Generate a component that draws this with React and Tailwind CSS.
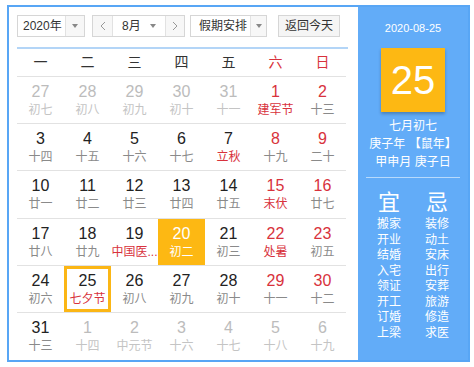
const FONT = { fontFamily: '"Liberation Sans", "Noto Sans CJK SC", sans-serif' };

const rows = [
  [
    { d: 27, l: "初七", out: true },
    { d: 28, l: "初八", out: true },
    { d: 29, l: "初九", out: true },
    { d: 30, l: "初十", out: true },
    { d: 31, l: "十一", out: true },
    { d: 1, l: "建军节", hol: true },
    { d: 2, l: "十三" },
  ],
  [
    { d: 3, l: "十四" },
    { d: 4, l: "十五" },
    { d: 5, l: "十六" },
    { d: 6, l: "十七" },
    { d: 7, l: "立秋", hol: true },
    { d: 8, l: "十九" },
    { d: 9, l: "二十" },
  ],
  [
    { d: 10, l: "廿一" },
    { d: 11, l: "廿二" },
    { d: 12, l: "廿三" },
    { d: 13, l: "廿四" },
    { d: 14, l: "廿五" },
    { d: 15, l: "末伏", hol: true },
    { d: 16, l: "廿七" },
  ],
  [
    { d: 17, l: "廿八" },
    { d: 18, l: "廿九" },
    { d: 19, l: "中国医...", hol: true },
    { d: 20, l: "初二", today: true },
    { d: 21, l: "初三" },
    { d: 22, l: "处暑", hol: true },
    { d: 23, l: "初五" },
  ],
  [
    { d: 24, l: "初六" },
    { d: 25, l: "七夕节", hol: true, sel: true },
    { d: 26, l: "初八" },
    { d: 27, l: "初九" },
    { d: 28, l: "初十" },
    { d: 29, l: "十一" },
    { d: 30, l: "十二" },
  ],
  [
    { d: 31, l: "十三" },
    { d: 1, l: "十四", out: true },
    { d: 2, l: "中元节", out: true },
    { d: 3, l: "十六", out: true },
    { d: 4, l: "十七", out: true },
    { d: 5, l: "十八", out: true },
    { d: 6, l: "十九", out: true },
  ],
];

const weekdays = ["一", "二", "三", "四", "五", "六", "日"];
const yi = ["搬家", "开业", "结婚", "入宅", "领证", "开工", "订婚", "上梁"];
const ji = ["装修", "动土", "安床", "出行", "安葬", "旅游", "修造", "求医"];

function Caret() {
  return <span className="block h-0 w-0 border-x-[3px] border-t-[4px] border-x-transparent border-t-[#888]" />;
}

function Chevron({ right }) {
  return (
    <svg width="6" height="10" viewBox="0 0 6 10" fill="none">
      <path d={right ? "M1 1l4 4-4 4" : "M5 1L1 5l4 4"} stroke="#999" strokeWidth="1" />
    </svg>
  );
}

function Cell({ c, col }) {
  let num = "text-[#222]";
  let lunar = "text-[#8a8a8a]";
  if (col >= 5) num = "text-[#d8323c]";
  if (c.hol) lunar = "text-[#d8323c]";
  if (c.out) {
    num = "text-[#bcbcbc]";
    lunar = "text-[#c4c4c4]";
  }
  let box = "";
  if (c.today) {
    box = "bg-[#fdb813]";
    num = "text-white";
    lunar = "text-white";
  }
  if (c.sel) box = "border-[3px] border-[#fbb615]";
  return (
    <div className={`flex w-[47px] flex-col items-center ${box}`}>
      <div className={`${c.sel ? "pt-[2px]" : "pt-[5px]"} text-[16px] leading-[20px] ${num}`}>{c.d}</div>
      <div className={`whitespace-nowrap text-[12px] leading-[16px] ${lunar}`}>{c.l}</div>
    </div>
  );
}

export default function App() {
  return (
    <div className="bg-white" style={FONT}>
      <div className="ml-[7px] mt-[5px] flex h-[357px] w-[463px] border-2 border-[#58a6f5]">
        <div className="w-[349px] pl-[8px] pt-[8px]">
          <div className="flex h-[22px] whitespace-nowrap text-[12px] text-[#333]">
            <div className="flex w-[68px] border border-[#d6d6d6] bg-white">
              <span className="flex-1 pl-[5px] leading-[20px]">2020年</span>
              <span className="flex w-[19px] items-center justify-center border-l border-[#e2e2e2] bg-[#f7f7f7]"><Caret /></span>
            </div>
            <div className="ml-[7px] flex w-[93px] border border-[#d6d6d6] bg-white">
              <span className="flex w-[20px] items-center justify-center border-r border-[#e2e2e2] bg-[#f7f7f7]"><Chevron /></span>
              <span className="flex flex-1 items-center justify-between pl-[9px] pr-[9px]">
                <span className="leading-[20px]">8月</span>
                <Caret />
              </span>
              <span className="flex w-[19px] items-center justify-center border-l border-[#e2e2e2] bg-[#f7f7f7]"><Chevron right /></span>
            </div>
            <div className="ml-[5px] flex w-[77px] border border-[#d6d6d6] bg-white">
              <span className="flex-1 pl-[8px] leading-[20px]">假期安排</span>
              <span className="flex w-[16px] items-center justify-center border-l border-[#e2e2e2] bg-[#f7f7f7]"><Caret /></span>
            </div>
            <div className="ml-[11px] flex w-[62px] items-center justify-center border border-[#d6d6d6] bg-[#f5f5f5] leading-[20px]">返回今天</div>
          </div>
          <div className="mt-[10px] h-[2px] w-[331px] bg-[#b3d5f7]" />
          <div className="flex h-[28px] w-[329px] border-b border-[#e2e2e2] text-[14px]">
            {weekdays.map((w, i) => (
              <div key={w} className={`flex w-[47px] items-center justify-center ${i >= 5 ? "text-[#d8323c]" : "text-[#333]"}`}>{w}</div>
            ))}
          </div>
          <div className="grid h-[283px] w-[329px] grid-rows-6">
            {rows.map((r, ri) => (
              <div key={ri} className={`flex ${ri < 5 ? "border-b border-[#e2e2e2]" : ""}`}>
                {r.map((c, ci) => (
                  <Cell key={ci} c={c} col={ci} />
                ))}
              </div>
            ))}
          </div>
        </div>
        <div className="flex flex-1 flex-col items-center bg-[#62acf8] text-white">
          <div className="pt-[14px] text-[11px] leading-[14px]">2020-08-25</div>
          <div className="mt-[13px] flex h-[64px] w-[64px] items-center justify-center bg-[#fdb813] text-[40px] shadow-[0_2px_3px_rgba(0,0,0,0.25)]">25</div>
          <div className="mt-[5px] text-center text-[12px] leading-[18px]">
            <div>七月初七</div>
            <div>庚子年 【鼠年】</div>
            <div>甲申月 庚子日</div>
          </div>
          <div className="mt-[6px] h-px w-[94px] bg-[#b7dafc]" />
          <div className="mt-[12px] flex">
            {[["宜", yi], ["忌", ji]].map(([t, list]) => (
              <div key={t} className="flex w-[48px] flex-col items-center">
                <div className="text-[22px] leading-[26px]">{t}</div>
                <div className="mt-[1px] text-[12px] leading-[15.5px]">
                  {list.map((x) => (
                    <div key={x}>{x}</div>
                  ))}
                </div>
              </div>
            ))}
          </div>
        </div>
      </div>
    </div>
  );
}
